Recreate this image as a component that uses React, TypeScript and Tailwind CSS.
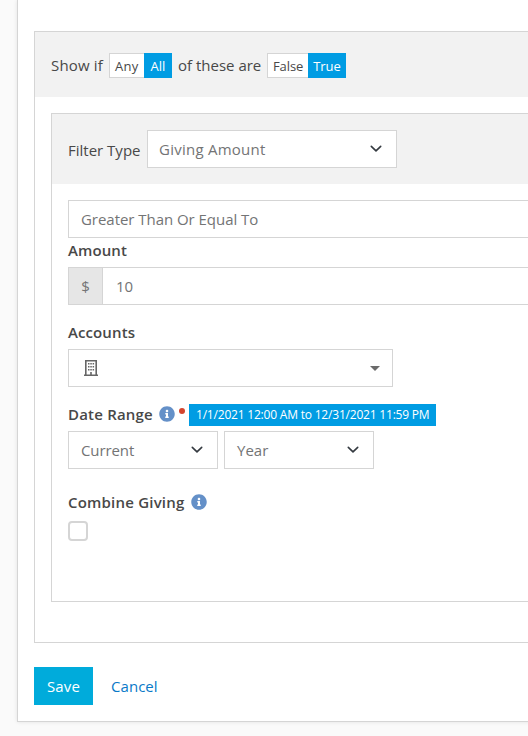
import React from "react";
import { FaInfoCircle } from "react-icons/fa";

function Chevron() {
  return (
    <svg width="12" height="8" viewBox="0 0 12 8" className="mr-0.5 shrink-0">
      <path d="M1.3 1.3l4.7 4.5 4.7-4.5" fill="none" stroke="#343a40" strokeWidth="1.6" strokeLinecap="round" strokeLinejoin="round" />
    </svg>
  );
}

function Select({ label, className }: { label: string; className: string }) {
  return (
    <div className={`flex h-[38px] shrink-0 items-center justify-between border border-[#d5d5d5] bg-white px-3 text-[#737475] ${className}`}>
      <span>{label}</span>
      <Chevron />
    </div>
  );
}

function BuildingIcon() {
  return (
    <svg width="14" height="16" viewBox="0 0 14 16" className="block">
      <path d="M1.8 15V.8h10.4V15M0 15.2h14" fill="none" stroke="#666" strokeWidth="1.6" />
      <path d="M4 3h1.5v1.6H4zM6.3 3h1.5v1.6H6.3zM8.6 3h1.5v1.6H8.6zM4 6h1.5v1.6H4zM6.3 6h1.5v1.6H6.3zM8.6 6h1.5v1.6H8.6zM4 9h1.5v1.6H4zM6.3 9h1.5v1.6H6.3zM8.6 9h1.5v1.6H8.6zM6.2 12h1.6v3H6.2z" fill="#666" />
    </svg>
  );
}

export default function App() {
  return (
    <div className="h-[736px] w-[528px] overflow-hidden bg-[#fafafa] pl-[17px] font-['Open_Sans','Noto_Sans',sans-serif] text-[15px] leading-6 whitespace-nowrap text-[#484848]">
      <div className="h-[722px] w-[560px] border-b border-l border-[#d5d5d5] bg-white pt-[31px] pl-4 shadow-[0_0_4px_rgba(0,0,0,0.1)]">
        <div className="h-[612px] border border-[#d5d5d5]">
          <div className="flex h-[65px] items-center bg-[#f2f2f2] pt-px pl-4">
            <span className="w-[58px] tracking-[0.15px]">Show if</span>
            <div className="flex h-[25px] text-[13px] leading-[25px]">
              <span className="w-[35px] border border-r-0 border-[#d5d5d5] bg-white pl-[5px] tracking-[0.3px]">Any</span>
              <span className="w-7 bg-[#009ce3] pt-px text-center text-white">All</span>
            </div>
            <span className="w-[95px] pl-1.5">of these are</span>
            <div className="flex h-[25px] text-[13px] leading-[25px]">
              <span className="w-[41px] border border-r-0 border-[#d5d5d5] bg-white pl-[5px] tracking-[-0.1px]">False</span>
              <span className="w-[38px] bg-[#009ce3] pt-px text-center text-white">True</span>
            </div>
          </div>

          <div className="mt-4 ml-4 h-[489px] border border-[#d5d5d5]">
            <div className="flex h-[70px] items-center bg-[#f2f2f2] pl-4">
              <span className="w-[79px] pt-0.5">Filter Type</span>
              <Select label="Giving Amount" className="w-[250px] pl-[11px] tracking-[0.25px]" />
            </div>

            <div className="pt-4 pl-4">
              <div className="flex h-[38px] items-center border border-[#d5d5d5] pl-3 tracking-[-0.04px] text-[#737475]">Greater Than Or Equal To</div>
              <div className="h-[29px] font-semibold tracking-[0.1px]">Amount</div>
              <div className="flex h-[38px] border border-[#d5d5d5] leading-9 text-[#737475]">
                <span className="w-[34px] border-r border-[#d5d5d5] bg-[#e6e6e6] text-center">$</span>
                <span className="pl-[13px]">10</span>
              </div>

              <div className="mt-[15px] h-[29px] font-semibold tracking-[0.1px]">Accounts</div>
              <div className="flex h-[38px] w-[325px] items-center justify-between border border-[#d5d5d5] pr-3 pl-[15px]">
                <BuildingIcon />
                <svg width="10" height="5" viewBox="0 0 10 5">
                  <path d="M0 0h10L5 5z" fill="#6b6b6b" />
                </svg>
              </div>

              <div className="mt-[17px] flex h-[22px]">
                <span className="w-[91px] leading-[21px] font-semibold tracking-[0.2px]">Date Range</span>
                <FaInfoCircle className="mt-0.5 h-4 w-4 text-[#6490c8]" />
                <span className="mt-1 ml-1 h-1.5 w-1.5 rounded-full bg-[#d4442e]" />
                <span className="ml-1 h-[22px] w-[247px] bg-[#009ce3] pl-[7px] text-xs leading-[22px] tracking-[-0.2px] text-white">1/1/2021 12:00 AM to 12/31/2021 11:59 PM</span>
              </div>
              <div className="mt-[5px] flex gap-1.5">
                <Select label="Current" className="w-[150px] tracking-[-0.1px]" />
                <Select label="Year" className="w-[150px]" />
              </div>

              <div className="mt-[21px] flex h-6 items-center">
                <span className="w-[123px] font-semibold tracking-[0.2px]">Combine Giving</span>
                <FaInfoCircle className="h-4 w-4 text-[#6490c8]" />
              </div>
              <div className="mt-[7px] h-5 w-5 rounded-[4px] border-2 border-[#d5d5d5]" />
            </div>
          </div>
        </div>

        <div className="mt-6 flex h-[38px] items-center">
          <div className="flex h-[38px] w-[59px] items-center justify-center bg-[#00abdb] tracking-[0.1px] text-white">Save</div>
          <span className="ml-[18px] tracking-[0.05px] text-[#0979c8]">Cancel</span>
        </div>
      </div>
    </div>
  );
}
